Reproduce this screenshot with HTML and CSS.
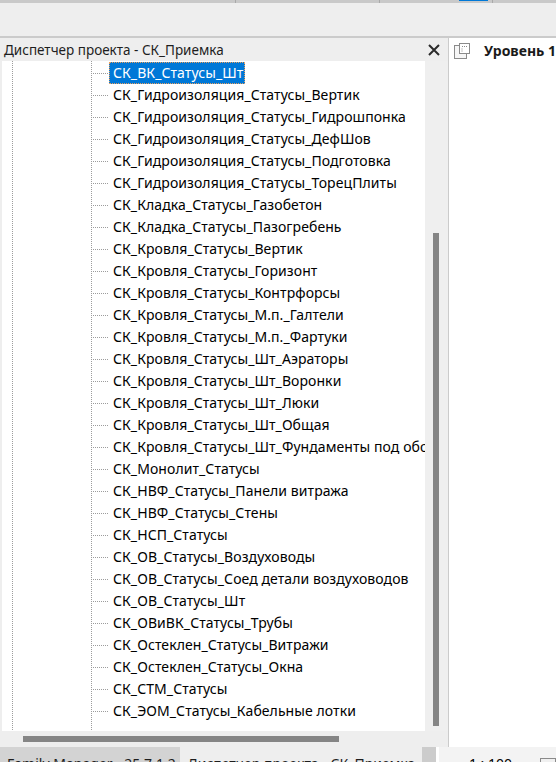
FILE: index.html
```html
<!DOCTYPE html>
<html lang="ru">
<head>
<meta charset="utf-8">
<title>Диспетчер проекта</title>
<link rel="stylesheet" href="styles.css">
</head>
<body>
<div class="app">
  <div class="topstrip">
    <div class="ts ts1"></div>
    <div class="ts ts2"></div>
    <div class="ts ts3"></div>
    <div class="ts ts4"><div class="ts-active"></div></div>
    <div class="ts ts5"></div>
    <div class="ts ts6"></div>
  </div>
  <div class="toolbar"></div>
  <div class="hline"></div>
  <div class="main">
    <div class="left">
      <div class="phead">
        <span class="ptitle">Диспетчер проекта - СК_Приемка</span>
        <svg class="close" width="12" height="12" viewBox="0 0 12 12"><path d="M1 1 L11 11 M11 1 L1 11" stroke="#2b2b2b" stroke-width="2" fill="none"/></svg>
      </div>
      <div class="pbody">
        <div class="tree">
          <div class="row sel"><span class="lbl">СК_ВК_Статусы_Шт</span></div>
          <div class="row"><span class="lbl">СК_Гидроизоляция_Статусы_Вертик</span></div>
          <div class="row"><span class="lbl">СК_Гидроизоляция_Статусы_Гидрошпонка</span></div>
          <div class="row"><span class="lbl">СК_Гидроизоляция_Статусы_ДефШов</span></div>
          <div class="row"><span class="lbl">СК_Гидроизоляция_Статусы_Подготовка</span></div>
          <div class="row"><span class="lbl">СК_Гидроизоляция_Статусы_ТорецПлиты</span></div>
          <div class="row"><span class="lbl">СК_Кладка_Статусы_Газобетон</span></div>
          <div class="row"><span class="lbl">СК_Кладка_Статусы_Пазогребень</span></div>
          <div class="row"><span class="lbl">СК_Кровля_Статусы_Вертик</span></div>
          <div class="row"><span class="lbl">СК_Кровля_Статусы_Горизонт</span></div>
          <div class="row"><span class="lbl">СК_Кровля_Статусы_Контрфорсы</span></div>
          <div class="row"><span class="lbl">СК_Кровля_Статусы_М.п._Галтели</span></div>
          <div class="row"><span class="lbl">СК_Кровля_Статусы_М.п._Фартуки</span></div>
          <div class="row"><span class="lbl">СК_Кровля_Статусы_Шт_Аэраторы</span></div>
          <div class="row"><span class="lbl">СК_Кровля_Статусы_Шт_Воронки</span></div>
          <div class="row"><span class="lbl">СК_Кровля_Статусы_Шт_Люки</span></div>
          <div class="row"><span class="lbl">СК_Кровля_Статусы_Шт_Общая</span></div>
          <div class="row"><span class="lbl">СК_Кровля_Статусы_Шт_Фундаменты под оборудование</span></div>
          <div class="row"><span class="lbl">СК_Монолит_Статусы</span></div>
          <div class="row"><span class="lbl">СК_НВФ_Статусы_Панели витража</span></div>
          <div class="row"><span class="lbl">СК_НВФ_Статусы_Стены</span></div>
          <div class="row"><span class="lbl">СК_НСП_Статусы</span></div>
          <div class="row"><span class="lbl">СК_ОВ_Статусы_Воздуховоды</span></div>
          <div class="row"><span class="lbl">СК_ОВ_Статусы_Соед детали воздуховодов</span></div>
          <div class="row"><span class="lbl">СК_ОВ_Статусы_Шт</span></div>
          <div class="row"><span class="lbl">СК_ОВиВК_Статусы_Трубы</span></div>
          <div class="row"><span class="lbl">СК_Остеклен_Статусы_Витражи</span></div>
          <div class="row"><span class="lbl">СК_Остеклен_Статусы_Окна</span></div>
          <div class="row"><span class="lbl">СК_СТМ_Статусы</span></div>
          <div class="row"><span class="lbl">СК_ЭОМ_Статусы_Кабельные лотки</span></div>
        </div>
        <div class="vscroll"><div class="vthumb"></div></div>
      </div>
      <div class="hscroll"><div class="hthumb"></div></div>
    </div>
    <div class="vsep"></div>
    <div class="right">
      <div class="rhead">
        <svg class="vicon" width="16" height="16" viewBox="0 0 16 16">
          <rect x="0.5" y="2.5" width="12" height="13" fill="#f6f6f6" stroke="#8a8a8a"/>
          <rect x="5.5" y="0.5" width="10" height="10" fill="#ffffff" stroke="#8a8a8a"/>
          <path d="M8 3.5 H13 M8 5.5 V8.5" stroke="#8a8a8a" stroke-dasharray="1 1" fill="none"/>
        </svg>
        <span class="rtitle">Уровень 1</span>
      </div>
    </div>
  </div>
  <div class="bottom">
    <div class="btab btab1">Family Manager - 25.7.1.2</div>
    <div class="btab btab2">Диспетчер проекта - СК_Приемка</div>
    <div class="bgap"></div>
    <div class="bsep"></div>
    <div class="status">
      <span class="scale">1 : 100</span>
      <span class="sbox"></span>
    </div>
  </div>
</div>
</body>
</html>
```
FILE: styles.css
```css
html, body {
  margin: 0;
  padding: 0;
  overflow: hidden;
}
body {
  width: 556px;
  height: 762px;
  font-family: "Noto Sans", "Open Sans", sans-serif;
  font-size: 14px;
  color: #000;
  background: #eeeeee;
}
.app {
  display: flex;
  flex-direction: column;
  width: 556px;
  height: 762px;
}
.topstrip {
  display: flex;
  height: 3px;
  background: #c9c9c9;
}
.ts { height: 3px; }
.ts1 { width: 235px; border-right: 1px solid #a9a9a9; }
.ts2 { width: 143px; border-right: 1px solid #a9a9a9; }
.ts3 { width: 79px; }
.ts4 { width: 29px; }
.ts-active { height: 1px; background: #0078d7; }
.ts5 { width: 4px; border-right: 1px solid #a9a9a9; }
.ts6 { flex: 1; }
.toolbar {
  height: 33px;
  background: #eeeeee;
}
.hline {
  height: 2px;
  background: #cbcbcb;
}
.main {
  display: flex;
  height: 709px;
}
.left {
  width: 448px;
  display: flex;
  flex-direction: column;
  background: #eeeeee;
}
.phead {
  height: 23px;
  display: flex;
  align-items: center;
  justify-content: space-between;
  padding: 0 8px 0 4px;
}
.ptitle {
  color: #1e1e1e;
  font-size: 13.5px;
  line-height: 20px;
}
.close { display: block; }
.pbody {
  flex: 1;
  display: flex;
  padding-left: 2px;
  min-height: 0;
}
.tree {
  flex: 1;
  background-color: #ffffff;
  background-image:
    linear-gradient(to bottom, #9c9c9c 1px, transparent 1px),
    linear-gradient(to bottom, #9c9c9c 1px, transparent 1px);
  background-size: 1px 2px, 1px 2px;
  background-position: 10px 0, 89px 0;
  background-repeat: repeat-y, repeat-y;
  overflow: hidden;
  padding-top: 1px;
  white-space: nowrap;
}
.row {
  height: 22px;
  display: flex;
  align-items: center;
}
.row::before {
  content: "";
  width: 18px;
  height: 1px;
  margin-left: 89px;
  flex: none;
  background-image: linear-gradient(to right, #9c9c9c 1px, transparent 1px);
  background-size: 2px 1px;
}
.lbl {
  display: flex;
  align-items: center;
  height: 22px;
  padding: 0 2px 0 4px;
  line-height: 22px;
  letter-spacing: 0.08px;
  box-sizing: border-box;
}
.sel .lbl {
  background: #0078d7;
  color: #ffffff;
  outline: 1px dotted #e8a060;
  outline-offset: -1px;
}
.vscroll {
  width: 23px;
  background: #efefef;
  display: flex;
  justify-content: center;
}
.vthumb {
  width: 6px;
  margin-top: 172px;
  height: 493px;
  background: #858585;
  margin-left: -2px;
}
.hscroll {
  height: 16px;
  display: flex;
  align-items: center;
}
.hthumb {
  width: 316px;
  height: 6px;
  margin-left: 23px;
  background: #858585;
}
.vsep {
  width: 2px;
  background: #cbcbcb;
}
.right {
  flex: 1;
  background: #ffffff;
}
.rhead {
  height: 23px;
  display: flex;
  align-items: center;
  gap: 14px;
  padding-left: 5px;
  padding-top: 1px;
}
.vicon { display: block; }
.rtitle {
  font-weight: 700;
  font-size: 14px;
  color: #1a1a1a;
  white-space: nowrap;
}
.bottom {
  display: flex;
  height: 15px;
  overflow: hidden;
}
.btab {
  padding: 7px 0 0 7px;
  line-height: 20px;
  color: #1e1e1e;
  white-space: nowrap;
  overflow: hidden;
}
.btab1 { width: 178px; background: #d3d3d3; }
.btab2 { width: 241px; background: #eeeeee; }
.bgap { width: 14px; background: #cccccc; }
.bsep { width: 3px; background: #ffffff; }
.status {
  flex: 1;
  background: #f3f3f3;
  display: flex;
  gap: 28px;
  padding: 7px 0 0 30px;
  line-height: 20px;
  white-space: nowrap;
}
.sbox {
  display: block;
  width: 14px;
  height: 14px;
  margin-top: 4px;
  border: 1px solid #8a8a8a;
  background: #f0f0f0;
}
```
